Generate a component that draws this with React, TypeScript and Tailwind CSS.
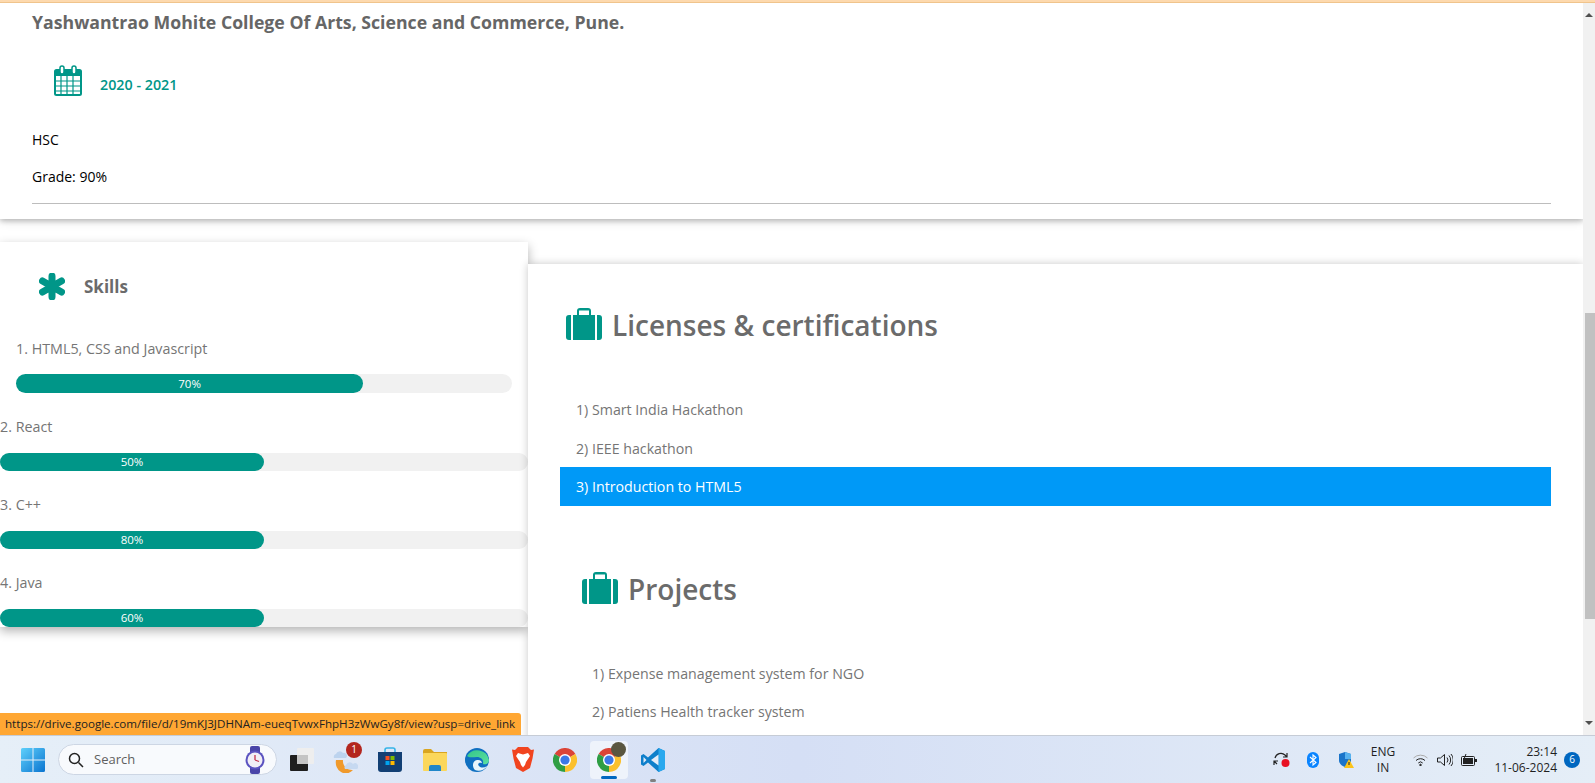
const skills = [
  { name: "2. React", label: "50%" },
  { name: "3. C++", label: "80%" },
  { name: "4. Java", label: "60%" },
];

function CalendarIcon() {
  return (
    <svg width="28" height="31" viewBox="0 0 28 31" className="text-[#009688]">
      <rect x="1" y="5" width="26" height="25" rx="1.5" fill="none" stroke="currentColor" strokeWidth="2" />
      <rect x="1" y="5" width="26" height="6" fill="currentColor" />
      <rect x="6" y="1" width="4" height="8" rx="2" fill="#fff" stroke="currentColor" strokeWidth="1.5" />
      <rect x="18" y="1" width="4" height="8" rx="2" fill="#fff" stroke="currentColor" strokeWidth="1.5" />
      <path d="M1 16h26M1 21h26M1 26h26M7 11v19M13 11v19M19 11v19" stroke="currentColor" strokeWidth="1.2" />
    </svg>
  );
}

function AsteriskIcon() {
  return (
    <svg width="26" height="27" viewBox="0 0 26 27" className="text-[#009688]">
      <path d="M13 3v21M3.500 8 22.500 19M22.500 8 3.500 19" stroke="currentColor" strokeWidth="7" strokeLinecap="round" />
    </svg>
  );
}

function SuitcaseIcon() {
  return (
    <svg width="36" height="32" viewBox="0 0 36 32" className="mb-[3px] shrink-0 text-[#009688]">
      <path d="M0 10a3 3 0 0 1 3-3h2v25H3a3 3 0 0 1-3-3z" fill="currentColor" />
      <path d="M36 10a3 3 0 0 0-3-3h-2v25h2a3 3 0 0 0 3-3z" fill="currentColor" />
      <path d="M7 7h4V3a3 3 0 0 1 3-3h8a3 3 0 0 1 3 3v4h4v25H7z" fill="currentColor" />
      <rect x="13" y="2.500" width="10" height="4.500" fill="#fff" />
    </svg>
  );
}

function WindowsLogo() {
  return (
    <svg width="24" height="24" viewBox="0 0 24 24">
      <defs>
        <linearGradient id="win" x1="0" y1="0" x2="1" y2="1">
          <stop offset="0" stopColor="#5fd0fb" />
          <stop offset="1" stopColor="#0a74d0" />
        </linearGradient>
      </defs>
      <path d="M0 1.500A1.500 1.500 0 0 1 1.500 0h10v11.500H0zM12.500 0h10A1.500 1.500 0 0 1 24 1.500v10H12.500zM0 12.500h11.500V24h-10A1.500 1.500 0 0 1 0 22.500zM12.500 12.500H24v10a1.500 1.500 0 0 1-1.500 1.500h-10z" fill="url(#win)" />
    </svg>
  );
}

function WatchIcon() {
  return (
    <svg width="20" height="28" viewBox="0 0 20 28">
      <rect x="5" y="0" width="10" height="28" rx="2" fill="#4a45a8" />
      <circle cx="10" cy="14" r="9.500" fill="#5a52c0" />
      <circle cx="10" cy="14" r="7.500" fill="#f1eef6" />
      <path d="M10 14V9M10 14l4 1.500" stroke="#c2334d" strokeWidth="1.300" />
    </svg>
  );
}

function TaskView() {
  return (
    <svg width="24" height="24" viewBox="0 0 24 24">
      <rect x="7" y="0" width="17" height="16" rx="1" fill="#eeeeee" />
      <rect x="0" y="7" width="18" height="16" rx="1" fill="#1e1e1e" />
      <rect x="7" y="7" width="11" height="9" fill="#c4c4c4" />
    </svg>
  );
}

function WeatherIcon() {
  return (
    <svg width="25" height="26" viewBox="0 0 25 26">
      <path d="M3 13a10 11 0 0 0 17 10 9 9 0 0 1-10-10z" fill="#f09a2c" />
      <path d="M1 11a3 3 0 0 1 2-4 4 4 0 0 1 7-1 3 3 0 0 1 3 5z" fill="#bcd3ee" />
      <path d="M12 22a3 3 0 0 1 1-4 4 4 0 0 1 7-1 3 3 0 0 1 4 5z" fill="#c6d9f1" />
    </svg>
  );
}

function StoreIcon() {
  return (
    <svg width="24" height="25" viewBox="0 0 24 25">
      <path d="M7 6V3a2 2 0 0 1 2-2h6a2 2 0 0 1 2 2v3" fill="none" stroke="#36b4e8" strokeWidth="1.600" />
      <path d="M0 5h24v17a3 3 0 0 1-3 3H3a3 3 0 0 1-3-3z" fill="#123f74" />
      <rect x="7.500" y="9" width="4" height="4" fill="#f25022" />
      <rect x="12.500" y="9" width="4" height="4" fill="#7fba00" />
      <rect x="7.500" y="14" width="4" height="4" fill="#00a4ef" />
      <rect x="12.500" y="14" width="4" height="4" fill="#ffb900" />
    </svg>
  );
}

function FolderIcon() {
  return (
    <svg width="24" height="22" viewBox="0 0 24 22">
      <path d="M0 2a2 2 0 0 1 2-2h6l3 3h13v4H0z" fill="#d9a520" />
      <rect x="0" y="4" width="24" height="18" rx="1" fill="#fbd75b" />
      <path d="M6 22v-4a2 2 0 0 1 2-2h8a2 2 0 0 1 2 2v4z" fill="#1f86c9" />
    </svg>
  );
}

function EdgeIcon() {
  return (
    <svg width="24" height="24" viewBox="0 0 24 24">
      <defs>
        <linearGradient id="edge" x1="0" y1="0" x2="1" y2="1">
          <stop offset="0" stopColor="#35c68a" />
          <stop offset="1" stopColor="#5ce0a0" />
        </linearGradient>
      </defs>
      <circle cx="12" cy="12" r="12" fill="#0f6fc0" />
      <path d="M2 8A12 12 0 0 1 24 12c0 4-4 5-6 4 1-4-2-7-6-7-4 0-8 1-10-1z" fill="url(#edge)" />
      <path d="M10 22c-3-3-3-9 2-10 3-.5 5 1 5 3-3-1-5 1-3 3 2 2 5 2 8 0-2 4-8 6-12 4z" fill="#e8f5fb" />
    </svg>
  );
}

function BraveIcon() {
  return (
    <svg width="22" height="25" viewBox="0 0 22 25">
      <path d="M6 0h10l3 3 3-.5-1.500 9L18 21l-7 4-7-4-2.500-9.500L0 2.500 3 3z" fill="#f1441f" />
      <path d="M6 6l5 1.500L16 6l2 3-4 6-1 3h-4l-1-3-4-6z" fill="#fff" />
      <path d="M9 18h4l-2 2.500z" fill="#fff" />
    </svg>
  );
}

function ChromeIcon({ size = 24 }: { size?: number }) {
  return (
    <svg width={size} height={size} viewBox="0 0 24 24">
      <path d="M12 12 1.600 6A12 12 0 0 1 22.400 6z" fill="#db4437" />
      <path d="M12 12 22.400 6A12 12 0 0 1 12 24z" fill="#fbc02d" />
      <path d="M12 12 12 24A12 12 0 0 1 1.600 6z" fill="#2f9e44" />
      <circle cx="12" cy="12" r="6" fill="#fff" />
      <circle cx="12" cy="12" r="4.600" fill="#3b78e7" />
    </svg>
  );
}

function VsCodeIcon() {
  return (
    <svg width="24" height="24" viewBox="0 0 24 24">
      <path d="M17.500 0 24 3v18l-6.500 3L7 14.500 2.500 18 0 16.500V7.500L2.500 6 7 9.500z" fill="#0e7fcb" />
      <path d="M17.500 0 24 3v18l-6.500 3z" fill="#29a8ee" />
      <path d="M17.500 6.500 10 12l7.500 5.500z" fill="#e4ecf8" />
      <path d="M2.500 9v6L5.500 12z" fill="#e4ecf8" />
    </svg>
  );
}

function SyncIcon() {
  return (
    <svg width="17" height="17" viewBox="0 0 17 17">
      <path d="M2 7a6 6 0 0 1 10-3l2 2M14 2v4h-4M1 10l3 3M1 14v-4h4" fill="none" stroke="#222" strokeWidth="1.200" />
      <circle cx="12.500" cy="12" r="4" fill="#e81123" />
    </svg>
  );
}

function BluetoothIcon() {
  return (
    <svg width="12" height="16" viewBox="0 0 12 16">
      <rect width="12" height="16" rx="6" fill="#0a84ff" />
      <path d="M3 5l6 5.500-3 2.500V3l3 2.500L3 11" fill="none" stroke="#fff" strokeWidth="1.100" />
    </svg>
  );
}

function ShieldIcon() {
  return (
    <svg width="16" height="16" viewBox="0 0 16 16">
      <path d="M7 0l6 2v6c0 4-3 6-6 7-3-1-6-3-6-7V2z" fill="#1a74c9" />
      <path d="M7 0l6 2v5H7z" fill="#57b2ef" />
      <path d="M11 7l5 9H6z" fill="#fcc419" />
      <path d="M11 10v3" stroke="#222" strokeWidth="1" />
    </svg>
  );
}

function TrayIcons() {
  return (
    <>
      <svg width="15" height="12" viewBox="0 0 15 12" fill="none" stroke="#222">
        <path d="M.5 4a10 10 0 0 1 14 0" stroke="#aaa" />
        <path d="M3 6.500a6.500 6.500 0 0 1 9 0" />
        <path d="M5.300 9a3 3 0 0 1 4.400 0" />
        <circle cx="7.500" cy="11" r=".8" fill="#222" />
      </svg>
      <svg className="ml-[9px]" width="16" height="14" viewBox="0 0 16 14" fill="none" stroke="#222">
        <path d="M.5 5v4h3l4 3.500v-11l-4 3.500z" />
        <path d="M10 4.500a4 4 0 0 1 0 5M12 2.500a7 7 0 0 1 0 9M14 1a9 9 0 0 1 0 12" />
      </svg>
      <svg className="ml-[8px]" width="16" height="12" viewBox="0 0 16 12">
        <rect x=".5" y="2.500" width="13" height="9" rx="1" fill="none" stroke="#222" />
        <rect x="2" y="4" width="10" height="6" fill="#222" />
        <rect x="14" y="5" width="2" height="3" fill="#222" />
        <path d="M5 0 3 5h3l-2 4" fill="none" stroke="#222" />
      </svg>
    </>
  );
}

function Taskbar() {
  return (
    <div className="flex h-[48px] items-center border-t border-[#c6ccd6] bg-gradient-to-r from-[#e6eff8] via-[#d5dff5] to-[#e5eef7] text-[#1f1f1f]">
      <div className="ml-[21px]">
        <WindowsLogo />
      </div>
      <div className="ml-[13px] flex h-[31px] w-[219px] items-center rounded-full border border-[#cdd6e4] bg-[#f8fafd] pl-[9px] pr-[11px]">
        <svg width="16" height="16" viewBox="0 0 16 16" fill="none" stroke="#222" strokeWidth="1.500">
          <circle cx="6.500" cy="6.500" r="5" />
          <path d="M10.500 10.500 15 15" />
        </svg>
        <span className="ml-[10px] flex-1 text-[13px] text-[#5f5f5f]">Search</span>
        <WatchIcon />
      </div>
      <div className="ml-[13px]">
        <TaskView />
      </div>
      <div className="relative ml-[19px]">
        <WeatherIcon />
        <span className="absolute -right-[4px] -top-[5px] flex h-[16px] w-[16px] items-center justify-center rounded-full bg-[#b3261e] text-[10px] text-white">
          1
        </span>
      </div>
      <div className="ml-[20px]">
        <StoreIcon />
      </div>
      <div className="ml-[21px]">
        <FolderIcon />
      </div>
      <div className="ml-[18px]">
        <EdgeIcon />
      </div>
      <div className="ml-[23px]">
        <BraveIcon />
      </div>
      <div className="ml-[19px]">
        <ChromeIcon />
      </div>
      <div className="relative ml-[13px] flex h-[38px] w-[38px] items-center justify-center rounded-[4px] bg-[#eef3fb]">
        <ChromeIcon />
        <span className="absolute right-[2px] top-[1px] h-[15px] w-[15px] rounded-full bg-[#5a5640]" />
        <span className="absolute bottom-0 left-[11px] h-[3px] w-[16px] rounded-full bg-[#0067c0]" />
      </div>
      <div className="relative ml-[13px]">
        <VsCodeIcon />
        <span className="absolute -bottom-[10px] left-[9px] h-[3px] w-[6px] rounded-full bg-[#808080]" />
      </div>
      <div className="ml-[608px]">
        <SyncIcon />
      </div>
      <div className="ml-[17px]">
        <BluetoothIcon />
      </div>
      <div className="ml-[19px]">
        <ShieldIcon />
      </div>
      <div className="ml-[17px] flex w-[24px] flex-col items-center text-[12px] leading-[16px]">
        <span>ENG</span>
        <span>IN</span>
      </div>
      <div className="ml-[18px] flex items-center">
        <TrayIcons />
      </div>
      <div className="ml-[16px] flex w-[64px] flex-col items-end text-[12px] leading-[16px]">
        <span>23:14</span>
        <span className="whitespace-nowrap">11-06-2024</span>
      </div>
      <span className="ml-[7px] flex h-[16px] w-[16px] items-center justify-center rounded-full bg-[#0067c0] text-[10px] text-white">
        6
      </span>
    </div>
  );
}

function Heading({ text, className }: { text: string; className: string }) {
  return (
    <div className={`flex items-center ${className}`}>
      <SuitcaseIcon />
      <h2 className="ml-[10px] whitespace-nowrap text-[28px] font-semibold leading-[36px] text-[#6b6b6b]">{text}</h2>
    </div>
  );
}

export default function App() {
  return (
    <div className="h-[783px] w-[1595px] overflow-hidden bg-white font-['Open_Sans','Noto_Sans',sans-serif]">
      <div className="h-[3px] border-b border-[#f0c48c] bg-[#fdd9ae]" />
      <div className="relative flex h-[732px] overflow-hidden">
        <div className="min-w-0 flex-1">
          <div className="relative z-10 h-[216px] bg-white px-[32px] shadow-[0_2px_5px_rgba(0,0,0,0.22),0_2px_10px_rgba(0,0,0,0.12)]">
            <h3 className="flex h-[38px] items-center whitespace-nowrap text-[17.7px] font-bold text-[#666666]">
              Yashwantrao Mohite College Of Arts, Science and Commerce, Pune.
            </h3>
            <div className="mt-[24px] flex h-[31px] items-center pl-[22px]">
              <CalendarIcon />
              <span className="ml-[18px] mt-[8px] text-[14.3px] font-semibold leading-[18px] text-[#009688]">
                2020 - 2021
              </span>
            </div>
            <p className="mt-[34px] text-[14px] leading-[20px] text-black">HSC</p>
            <p className="mt-[17px] text-[14px] leading-[20px] text-black">Grade: 90%</p>
            <hr className="mt-[16px] border-t border-[#bdbdbd]" />
          </div>
          <div className="flex items-start">
            <div className="mt-[23px] h-[385px] w-[528px] bg-white shadow-[0_4px_10px_rgba(0,0,0,0.3)]">
              <div className="mt-[27px] flex h-[32px] items-center pl-[39px] pt-[2px]">
                <AsteriskIcon />
                <span className="ml-[19px] mt-[2px] text-[17px] font-bold text-[#6b6b6b]">Skills</span>
              </div>
              <div className="px-[16px]">
                <p className="mt-[38px] text-[14.3px] leading-[20px] text-[#757575]">1. HTML5, CSS and Javascript</p>
                <div className="mt-[15px] h-[19px] rounded-full bg-[#f1f1f1]">
                  <div className="flex h-full w-[70%] items-center justify-center rounded-full bg-[#009688] text-[11.5px] text-white">
                    70%
                  </div>
                </div>
              </div>
              {skills.map((skill, index) => (
                <div key={index}>
                  <p className="mt-[24px] text-[14.3px] leading-[20px] text-[#757575]">{skill.name}</p>
                  <div className="mt-[16px] h-[18px] rounded-full bg-[#f1f1f1]">
                    <div className="flex h-full w-[50%] items-center justify-center rounded-full bg-[#009688] text-[11.5px] text-white">
                      {skill.label}
                    </div>
                  </div>
                </div>
              ))}
            </div>
            <div className="relative z-20 mt-[45px] min-w-0 flex-1 bg-white px-[32px] pb-[40px] pt-[43px] shadow-[0_0_8px_rgba(0,0,0,0.22)]">
              <Heading text="Licenses & certifications" className="pl-[6px]" />
              <ul className="mt-[46px] text-[14.2px] text-[#757575]">
                <li className="flex h-[39px] items-center pl-[16px] pt-[2px]">1) Smart India Hackathon</li>
                <li className="flex h-[39px] items-center pl-[16px] pt-[2px]">2) IEEE hackathon</li>
                <li className="flex h-[39px] items-center bg-[#0099f7] pl-[16px] text-white">3) Introduction to HTML5</li>
              </ul>
              <Heading text="Projects" className="mt-[65px] pl-[22px]" />
              <ul className="mt-[48px] pl-[16px] text-[14.2px] text-[#757575]">
                <li className="flex h-[38px] items-center pl-[16px]">1) Expense management system for NGO</li>
                <li className="flex h-[38px] items-center pl-[16px]">2) Patiens Health tracker system</li>
              </ul>
            </div>
          </div>
        </div>
        <div className="relative z-30 flex w-[12px] flex-col items-center bg-[#f1f1f1]">
          <div className="mt-[10px] h-0 w-0 border-x-[4px] border-b-[4px] border-x-transparent border-b-[#505050]" />
          <div className="ml-[2px] mt-[296px] h-[306px] w-[10px] bg-[#c1c1c1]" />
          <div className="mt-[102px] h-0 w-0 border-x-[4px] border-t-[4px] border-x-transparent border-t-[#505050]" />
        </div>
        <div className="absolute bottom-0 left-0 z-30 flex h-[22px] w-[521px] items-center whitespace-nowrap rounded-tr-[3px] bg-[#ffa733] pl-[5px] text-[11.6px] text-[#222]">
          https://drive.google.com/file/d/19mKJ3JDHNAm-eueqTvwxFhpH3zWwGy8f/view?usp=drive_link
        </div>
      </div>
      <Taskbar />
    </div>
  );
}
